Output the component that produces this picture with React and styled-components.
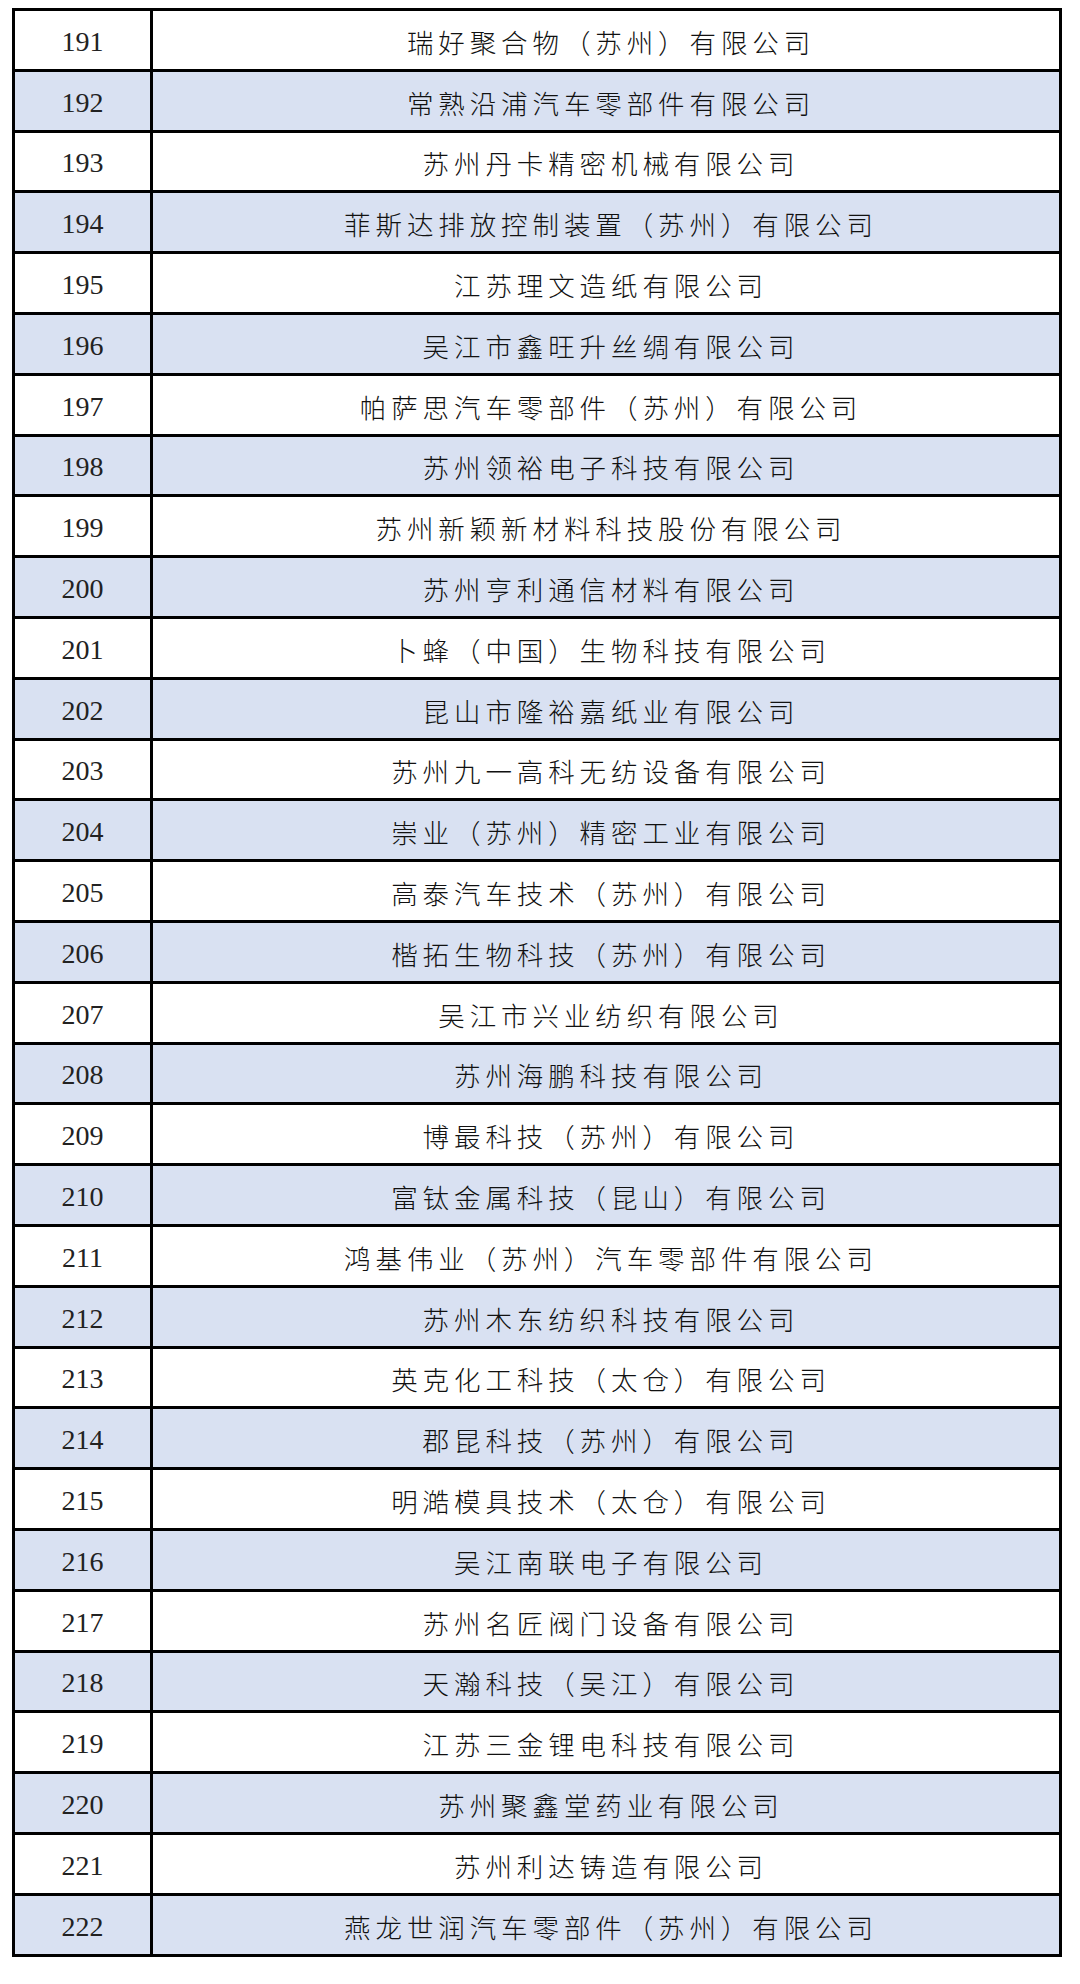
import React from "react";
import styled, { createGlobalStyle } from "styled-components";

const GlobalStyle = createGlobalStyle`
  html, body {
    margin: 0;
    padding: 0;
    background: #ffffff;
  }
  body {
    font-family: "Liberation Serif", "Noto Sans CJK SC", serif;
  }
`;

const Page = styled.div`
  width: 1080px;
  min-height: 1984px;
  box-sizing: border-box;
  padding: 8px 0 0 12px;
  background: #ffffff;
`;

const Table = styled.div`
  width: 1050px;
  box-sizing: border-box;
  border: 3px solid #000000;
  display: flex;
  flex-direction: column;
`;

const Row = styled.div`
  display: grid;
  grid-template-columns: 138px 1fr;
  height: ${(p) => (p.$first ? "57.8px" : "60.8px")};
  box-sizing: border-box;
  border-top: ${(p) => (p.$first ? "none" : "3px solid #000000")};
  background: ${(p) => (p.$shaded ? "#D9E1F2" : "#FFFFFF")};
`;

const NumCell = styled.div`
  box-sizing: border-box;
  border-right: 3px solid #000000;
  display: flex;
  align-items: center;
  justify-content: center;
  padding-top: 4px;
  font-family: "Liberation Serif", "DejaVu Serif", serif;
  font-size: 28px;
  color: #222222;
`;

const NameCell = styled.div`
  display: flex;
  align-items: center;
  justify-content: center;
  padding-top: 3px;
  padding-left: 10px;
  font-family: "Noto Sans CJK SC", "Noto Sans CJK JP", sans-serif;
  font-size: 26.5px;
  font-weight: 300;
  letter-spacing: 4.9px;
  color: #111111;
  white-space: nowrap;
`;

const names = [
  "瑞好聚合物（苏州）有限公司",
  "常熟沿浦汽车零部件有限公司",
  "苏州丹卡精密机械有限公司",
  "菲斯达排放控制装置（苏州）有限公司",
  "江苏理文造纸有限公司",
  "吴江市鑫旺升丝绸有限公司",
  "帕萨思汽车零部件（苏州）有限公司",
  "苏州领裕电子科技有限公司",
  "苏州新颖新材料科技股份有限公司",
  "苏州亨利通信材料有限公司",
  "卜蜂（中国）生物科技有限公司",
  "昆山市隆裕嘉纸业有限公司",
  "苏州九一高科无纺设备有限公司",
  "崇业（苏州）精密工业有限公司",
  "高泰汽车技术（苏州）有限公司",
  "楷拓生物科技（苏州）有限公司",
  "吴江市兴业纺织有限公司",
  "苏州海鹏科技有限公司",
  "博最科技（苏州）有限公司",
  "富钛金属科技（昆山）有限公司",
  "鸿基伟业（苏州）汽车零部件有限公司",
  "苏州木东纺织科技有限公司",
  "英克化工科技（太仓）有限公司",
  "郡昆科技（苏州）有限公司",
  "明澔模具技术（太仓）有限公司",
  "吴江南联电子有限公司",
  "苏州名匠阀门设备有限公司",
  "天瀚科技（吴江）有限公司",
  "江苏三金锂电科技有限公司",
  "苏州聚鑫堂药业有限公司",
  "苏州利达铸造有限公司",
  "燕龙世润汽车零部件（苏州）有限公司",
];

export default function App() {
  return (
    <>
      <GlobalStyle />
      <Page>
        <Table>
          {names.map((name, i) => (
            <Row key={i} $first={i === 0} $shaded={i % 2 === 1}>
              <NumCell>{191 + i}</NumCell>
              <NameCell>{name}</NameCell>
            </Row>
          ))}
        </Table>
      </Page>
    </>
  );
}
